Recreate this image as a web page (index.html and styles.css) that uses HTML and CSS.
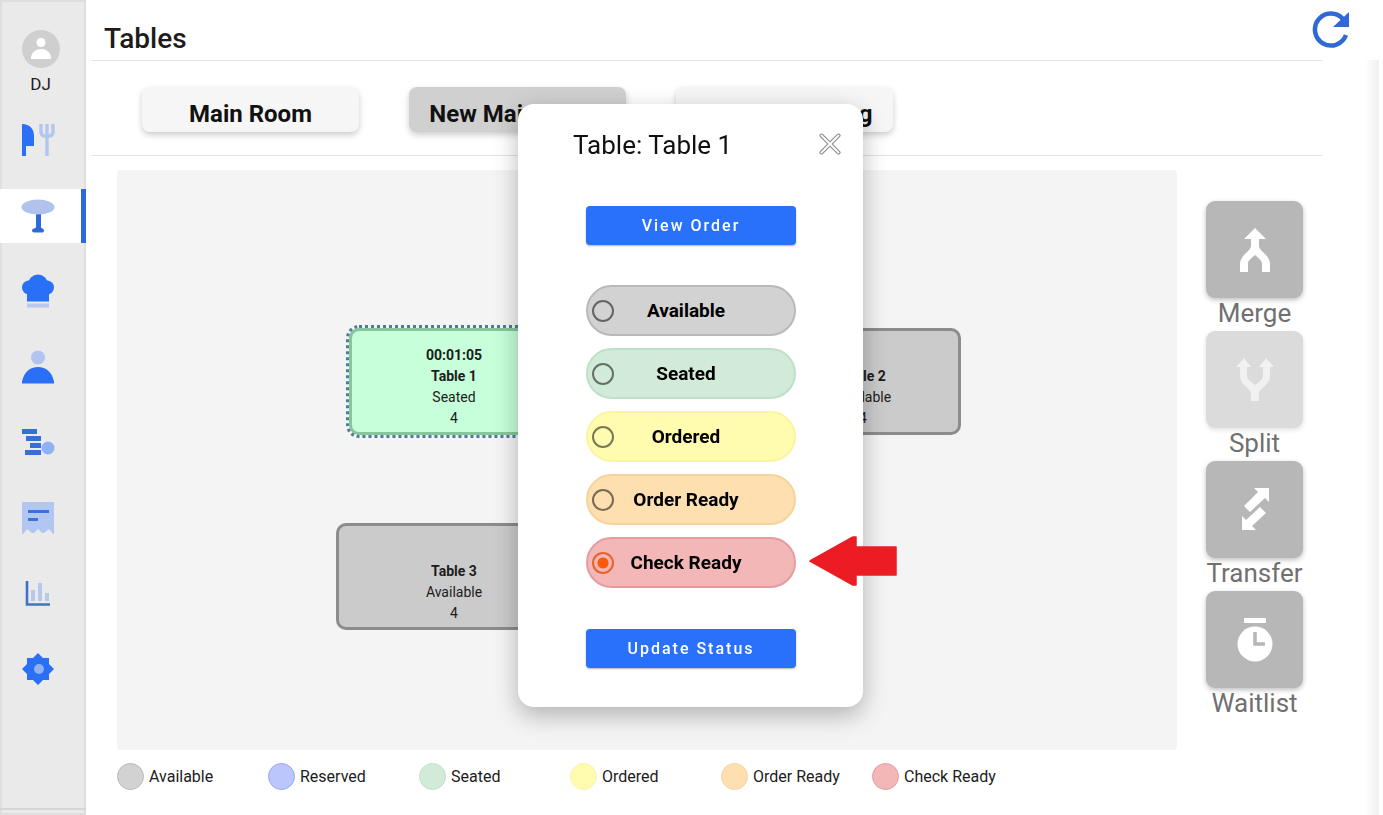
FILE: index.html
```html
<!DOCTYPE html>
<html lang="en">
<head>
<meta charset="utf-8">
<meta name="viewport" content="width=device-width, initial-scale=1">
<title>Tables</title>
<link rel="stylesheet" href="styles.css">
</head>
<body>
<div class="app">
  <aside class="sidebar">
    <button class="profile" type="button">
      <svg class="avatar" viewBox="0 0 38 38" aria-hidden="true"><circle cx="19" cy="19" r="19" fill="#cfcfcf"/><circle cx="19" cy="12.500" r="4.500" fill="#fff"/><path d="M9 29v-2c1-5 5-8 10-8s9 3 10 8v2z" fill="#fff"/></svg>
      <span>DJ</span>
    </button>
    <nav class="nav" aria-label="Main">
      <a class="nav-item" href="#orders" aria-label="Orders"><svg viewBox="0 0 34 34"><path d="M1 1c8 0 12 5 12 12v10H5v10H1z" fill="#2970f6"/><path d="M20 1v8q0 4 4 4h4q4 0 4-4V1M26 1v32" fill="none" stroke="#b1c6f0" stroke-width="3.400"/></svg></a>
      <a class="nav-item active" href="#tables" aria-label="Tables" aria-current="page"><svg viewBox="0 0 34 34"><path d="M15 14h5v14c0 2 3 1 3 3.500S21 33.500 17.500 33.500 11 34 11 31.500 15 30 15 28z" fill="#2e69d9"/><ellipse cx="17" cy="8" rx="16.500" ry="7.500" fill="#b1c2ed"/></svg></a>
      <a class="nav-item" href="#kitchen" aria-label="Kitchen"><svg viewBox="0 0 34 34"><g fill="#2970f6"><circle cx="8" cy="13.500" r="7"/><circle cx="26" cy="13.500" r="7"/><circle cx="17" cy="10.500" r="10"/><path d="M6 14h22v13.500H6z"/></g><path d="M6 29.500h22v4H6z" fill="#b9c8ef"/></svg></a>
      <a class="nav-item" href="#customers" aria-label="Customers"><svg viewBox="0 0 34 34"><circle cx="17" cy="7.500" r="7" fill="#b1c4ee"/><path d="M1 33.500v-2C3 22 9 17 17 17s14 5 16 14.500v2z" fill="#2970f6"/></svg></a>
      <a class="nav-item" href="#cash" aria-label="Cash"><svg viewBox="0 0 34 34"><path d="M1 4h15v5H1zM5 11h15v5H5zM9 18h11v5H9zM4 25h16v5H4z" fill="#3470d8"/><circle cx="27" cy="23" r="6.500" fill="#8fb1f2"/></svg></a>
      <a class="nav-item" href="#receipts" aria-label="Receipts"><svg viewBox="0 0 34 34"><path d="M1 1h32v32h-1l-4-5-5 4-2 0-4-4-4 4h-2l-5-4-4 5H1z" fill="#b1c6f0"/><path d="M7 10.500h21M7 18.500h10" stroke="#3a72d8" stroke-width="3.200"/></svg></a>
      <a class="nav-item" href="#reports" aria-label="Reports"><svg viewBox="0 0 34 34"><path d="M6 5v23.500H29" fill="none" stroke="#3f73c8" stroke-width="2.600"/><path d="M12 25V14M19 25V7M26 25v-8" stroke="#b8c8ec" stroke-width="4"/></svg></a>
      <a class="nav-item" href="#settings" aria-label="Settings"><svg viewBox="0 0 34 34"><path d="M17 1l5 5h6v6l5 5-5 5v6h-6l-5 5-5-5H6v-6l-5-5 5-5V6h6z" fill="#2970f6"/><circle cx="18" cy="17" r="5" fill="#8fb1f2"/></svg></a>
    </nav>
    <div class="sidebar-foot"></div>
  </aside>

  <main class="main">
    <header class="header">
      <h1>Tables</h1>
      <button class="refresh" type="button" aria-label="Refresh"><svg viewBox="0 0 38 38"><path d="M34 24A16 16 0 1 1 31 8" fill="none" stroke="#2f69d6" stroke-width="4.500"/><path d="M37 1v15H21z" fill="#2f69d6"/></svg></button>
    </header>
    <div class="body">
      <div class="content">
        <div class="rooms">
          <button class="room" type="button">Main Room</button>
          <button class="room selected" type="button">New Main Room</button>
          <button class="room" type="button">Outdoor Seating</button>
        </div>
        <div class="floor">
          <div class="floor-col">
            <section class="canvas" aria-label="Floor plan">
              <button class="tile t1" type="button"><b>00:01:05</b><b>Table 1</b><span>Seated</span><span>4</span></button>
              <button class="tile t2" type="button"><b>Table 2</b><span>Available</span><span>4</span></button>
              <button class="tile t3" type="button"><b>Table 3</b><span>Available</span><span>4</span></button>
            </section>
            <ul class="legend">
              <li><i class="dot available"></i>Available</li>
              <li><i class="dot reserved"></i>Reserved</li>
              <li><i class="dot seated"></i>Seated</li>
              <li><i class="dot ordered"></i>Ordered</li>
              <li><i class="dot order-ready"></i>Order Ready</li>
              <li><i class="dot check-ready"></i>Check Ready</li>
            </ul>
          </div>
          <div class="actions">
            <button class="action" type="button"><span class="action-box"><svg viewBox="0 0 48 48"><path d="M24 2l11 11h-7v7c0 5 11 9 11 18v8h-8v-8c0-4-4-6-7-9-3 3-7 5-7 9v8H9v-8c0-9 11-13 11-18v-7h-7z" fill="#fff"/></svg></span>Merge</button>
            <button class="action muted" type="button"><span class="action-box"><svg viewBox="0 0 48 48"><path d="M20 45V36C17 31 9 28 9 20v-9H5l8-9 7 9h-4v9c0 4 5 6 8 9 3-3 8-5 8-9v-9h-4l7-9 8 9h-4v9c0 8-8 11-11 16v9z" fill="#f1f1f1"/></svg></span>Split</button>
            <button class="action" type="button"><span class="action-box"><svg viewBox="0 0 48 48"><path d="M23 2h15v14l-4-4-15 14-6-6L27 6zM29 21l6 6-14 13 4 4H11V30l4 4z" fill="#fff"/></svg></span>Transfer</button>
            <button class="action" type="button"><span class="action-box"><svg viewBox="0 0 48 48"><rect x="13" y="2" width="22" height="5" rx="1" fill="#fff"/><circle cx="24" cy="28" r="17.500" fill="#fff"/><path d="M24 16v12h10" fill="none" stroke="#b7b7b7" stroke-width="3.600"/></svg></span>Waitlist</button>
          </div>
        </div>
      </div>
      <div class="edge"></div>
    </div>
  </main>
</div>

<div class="overlay">
  <form class="dialog" role="dialog" aria-labelledby="dialog-title">
    <div class="dialog-head">
      <h2 id="dialog-title">Table: Table 1</h2>
      <button class="close" type="button" aria-label="Close"><svg viewBox="0 0 22 22"><path d="M2.500 2.500l17 17M19.500 2.500l-17 17" stroke="#888" stroke-width="4" stroke-linecap="round"/><path d="M2.500 2.500l17 17M19.500 2.500l-17 17" stroke="#fff" stroke-width="2" stroke-linecap="round"/></svg></button>
    </div>
    <button class="primary" type="button">View Order</button>
    <div class="options" role="radiogroup" aria-label="Table status">
      <label class="option available"><input type="radio" name="status"><span>Available</span></label>
      <label class="option seated"><input type="radio" name="status"><span>Seated</span></label>
      <label class="option ordered"><input type="radio" name="status"><span>Ordered</span></label>
      <label class="option order-ready"><input type="radio" name="status"><span>Order Ready</span></label>
      <label class="option check-ready"><input type="radio" name="status" checked><span>Check Ready</span>
        <svg class="pointer" viewBox="0 0 88 52" aria-hidden="true"><path d="M1 26L44 2h3v10h40v28H47v10h-3z" fill="#ec1c24" stroke="#ec1c24" stroke-width="1.500" stroke-linejoin="round"/></svg></label>
    </div>
    <button class="primary" type="submit">Update Status</button>
  </form>
</div>
</body>
</html>
```

FILE: styles.css
```css
* { box-sizing: border-box; }

body {
  margin: 0;
  font-family: Roboto, "Liberation Sans", sans-serif;
  color: #1c1c1c;
  background: #fff;
}

button {
  font: inherit;
  color: inherit;
  border: 0;
  padding: 0;
  background: none;
  cursor: pointer;
}

svg { display: block; }

.app { display: flex; min-height: 100vh; }

/* Sidebar */
.sidebar {
  flex: none;
  width: 86px;
  display: flex;
  flex-direction: column;
  background: #eaeaea;
  box-shadow: inset 0 0 0 2px #dedede;
}
.profile {
  display: flex;
  flex-direction: column;
  align-items: center;
  gap: 5px;
  padding: 30px 5px 0 0;
  font-size: 17px;
  line-height: 22px;
}
.avatar { width: 38px; height: 38px; }
.nav {
  flex: 1;
  display: flex;
  flex-direction: column;
  justify-content: space-between;
  padding: 18px 0 112px;
}
.nav-item {
  height: 54px;
  padding-left: 21px;
  display: flex;
  align-items: center;
}
.nav-item svg { width: 34px; height: 34px; }
.nav-item.active { background: #fff; border-right: 5px solid #2e69d9; }
.sidebar-foot { height: 7px; border-top: 2px solid #d6d6d6; }

/* Header */
.main { flex: 1; min-width: 0; display: flex; flex-direction: column; }
.header {
  height: 60px;
  display: flex;
  align-items: center;
  justify-content: space-between;
  padding: 0 33px 0 18px;
}
h1 { margin: 0; padding-top: 17px; font-size: 28px; line-height: 32px; font-weight: 500; }
.refresh svg { width: 38px; height: 38px; }

.body { flex: 1; display: flex; }
.content { flex: 1; padding-left: 6px; display: flex; flex-direction: column; }
.edge {
  width: 14px;
  margin: 0 4px 0 43px;
  background: linear-gradient(90deg, #fff, #f0f0f0);
}

.rooms {
  display: flex;
  gap: 50px;
  padding: 26px 50px 23px;
  border-top: 1px solid #e4e4e4;
  border-bottom: 1px solid #e4e4e4;
}
.room {
  width: 217px;
  height: 45px;
  padding-top: 8px;
  border-radius: 8px;
  background: #f6f6f6;
  box-shadow: 0 3px 6px rgba(0, 0, 0, .2);
  font-size: 24px;
  line-height: 28px;
  font-weight: 700;
  color: #111;
}
.room.selected { background: #d0d0d0; }

/* Floor plan */
.floor { flex: 1; display: flex; gap: 29px; padding: 14px 19px 0 25px; }
.floor-col { flex: 1; display: flex; flex-direction: column; }
.canvas {
  position: relative;
  flex: 1;
  background: #f4f4f4;
  border-radius: 4px;
}
.tile {
  position: absolute;
  height: 107px;
  display: flex;
  flex-direction: column;
  align-items: center;
  justify-content: flex-end;
  padding-bottom: 3px;
  border: 3px solid #8c8c8c;
  border-radius: 10px;
  background: #cbcbcb;
  font-size: 14px;
  line-height: 21px;
}
.t1 {
  left: 232px;
  top: 158px;
  width: 210px;
  background: #c6ffda;
  border-color: #86c69a;
  outline: 3px dotted #4a7d9c;
}
.t2 { left: 648px; top: 158px; width: 196px; }
.t3 { left: 219px; top: 353px; width: 236px; }

.legend {
  display: flex;
  list-style: none;
  margin: 0;
  padding: 13px 0 25px;
  font-size: 16px;
  line-height: 27px;
}
.legend li { width: 151px; display: flex; gap: 5px; align-items: center; white-space: nowrap; }
.dot { width: 27px; height: 27px; border-radius: 50%; border: 1px solid; }

.dot.available, .option.available { background: #d2d2d2; border-color: #b9b9b9; }
.dot.reserved { background: #bbc6fc; border-color: #9ba7e2; }
.dot.seated, .option.seated { background: #d1ebd8; border-color: #bfe0c8; }
.dot.ordered, .option.ordered { background: #fffbaf; border-color: #faf5a4; }
.dot.order-ready, .option.order-ready { background: #fddfb0; border-color: #f6d39c; }
.dot.check-ready, .option.check-ready { background: #f3b7b8; border-color: #e59c9f; }

/* Actions */
.actions { width: 97px; padding-top: 31px; display: flex; flex-direction: column; }
.action {
  display: flex;
  flex-direction: column;
  align-items: center;
  padding-bottom: 2px;
  font-size: 26px;
  line-height: 31px;
  color: #707070;
}
.action-box {
  width: 97px;
  height: 97px;
  display: grid;
  place-items: center;
  border-radius: 9px;
  background: #b7b7b7;
  box-shadow: 0 2px 5px rgba(0, 0, 0, .25);
}
.action-box svg { width: 48px; height: 48px; }
.muted .action-box { background: #dbdbdb; box-shadow: 0 2px 5px rgba(0, 0, 0, .12); }

/* Dialog */
.overlay {
  position: fixed;
  inset: 0;
  display: flex;
  align-items: center;
  justify-content: center;
  padding: 0 2px 4px 0;
}
.dialog {
  width: 345px;
  padding: 23px 67px 39px 68px;
  border-radius: 16px;
  background: #fff;
  box-shadow: 0 8px 24px rgba(0, 0, 0, .28);
}
.dialog-head {
  display: flex;
  justify-content: space-between;
  align-items: center;
  margin: 0 -45px 43px -13px;
}
h2 { margin: 0; font-size: 26px; line-height: 36px; font-weight: 400; color: #111; }
.close { padding-bottom: 3px; }
.close svg { width: 22px; height: 22px; }
.primary {
  display: block;
  width: 100%;
  height: 39px;
  border-radius: 4px;
  background: #2970fa;
  box-shadow: 0 1px 2px rgba(0, 0, 0, .3);
  color: #fff;
  font-size: 16px;
  font-weight: 500;
  letter-spacing: 2px;
}
.options { display: flex; flex-direction: column; gap: 12px; margin: 40px 0 41px; }
.option {
  position: relative;
  height: 51px;
  display: flex;
  align-items: center;
  padding: 0 36px 0 4px;
  border: 2px solid;
  border-radius: 26px;
  font-size: 19px;
  font-weight: 700;
  color: #000;
}
.option span { flex: 1; text-align: center; white-space: nowrap; }
.option input {
  appearance: none;
  width: 22px;
  height: 22px;
  margin: 0;
  border: 2px solid rgba(0, 0, 0, .52);
  border-radius: 50%;
}
.option input:checked {
  border-color: #e8622a;
  background: radial-gradient(circle, #fb5a08 5px, transparent 6px);
}
.pointer {
  position: absolute;
  left: 221px;
  top: -4px;
  width: 88px;
  height: 52px;
}
```
